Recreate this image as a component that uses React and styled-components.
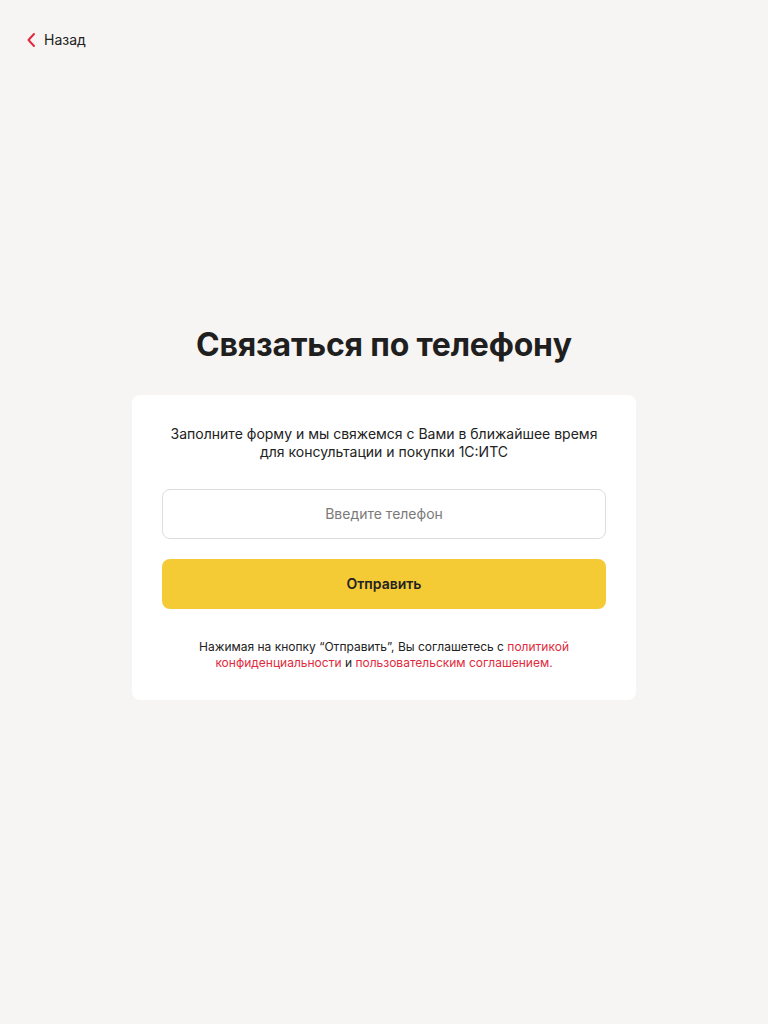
import React, { useState } from 'react';
import styled, { createGlobalStyle } from 'styled-components';

const GlobalStyle = createGlobalStyle`
  * { box-sizing: border-box; }
  body {
    margin: 0;
    background: #f6f5f3;
    font-family: Inter, 'Noto Sans', sans-serif;
    color: #222222;
  }
`;

const Page = styled.div`
  min-height: 100vh;
  display: flex;
  flex-direction: column;
`;

const Header = styled.header`
  height: 80px;
  padding: 30px 26px 0;
`;

const BackLink = styled.a`
  display: inline-flex;
  align-items: center;
  gap: 8px;
  font-size: 14px;
  line-height: 20px;
  color: #222222;
  text-decoration: none;
  cursor: pointer;
`;

const Main = styled.main`
  flex: 1;
  display: flex;
  flex-direction: column;
  align-items: center;
  justify-content: center;
  padding-bottom: 80px;
`;

const Title = styled.h1`
  margin: 0 0 30px;
  font-size: 32px;
  line-height: 40px;
  font-weight: 700;
  letter-spacing: -0.2px;
  color: #1f1f1f;
  text-align: center;
`;

const Card = styled.form`
  width: 504px;
  background: #ffffff;
  border-radius: 8px;
  padding: 30px 30px 29px;
  display: flex;
  flex-direction: column;
  align-items: stretch;
`;

const Lead = styled.p`
  margin: 0 0 28px;
  font-size: 14px;
  line-height: 18px;
  text-align: center;
  color: #222222;
`;

const PhoneInput = styled.input`
  height: 50px;
  border: 1px solid #dcdde0;
  border-radius: 8px;
  font-family: inherit;
  font-size: 14px;
  text-align: center;
  color: #222222;
  outline: none;
  &::placeholder { color: #7a7a7a; }
`;

const SubmitButton = styled.button`
  margin-top: 20px;
  height: 50px;
  border: none;
  border-radius: 8px;
  background: #f4cb35;
  font-family: inherit;
  font-size: 14px;
  font-weight: 600;
  color: #222222;
  cursor: pointer;
`;

const Legal = styled.p`
  margin: 30px 0 0;
  font-size: 12px;
  line-height: 16px;
  text-align: center;
  color: #222222;
`;

const RedLink = styled.a`
  color: #e12a3d;
  text-decoration: none;
`;

function Chevron() {
  return (
    <svg width="10" height="16" viewBox="0 0 10 16" fill="none">
      <path d="M8 2L2.5 8L8 14" stroke="#e12a3d" strokeWidth="2" strokeLinecap="round" strokeLinejoin="round" />
    </svg>
  );
}

function App() {
  const [phone, setPhone] = useState('');

  function handleSubmit(e) {
    e.preventDefault();
  }

  return (
    <Page>
      <GlobalStyle />
      <Header>
        <BackLink>
          <Chevron />
          Назад
        </BackLink>
      </Header>
      <Main>
        <Title>Связаться по телефону</Title>
        <Card onSubmit={handleSubmit}>
          <Lead>
            Заполните форму и мы свяжемся с Вами в ближайшее время
            <br />
            для консультации и покупки 1С:ИТС
          </Lead>
          <PhoneInput
            placeholder="Введите телефон"
            type="tel"
            value={phone}
            onChange={e => setPhone(e.target.value)}
          />
          <SubmitButton type="submit">Отправить</SubmitButton>
          <Legal>
            Нажимая на кнопку “Отправить”, Вы соглашетесь с <RedLink>политикой</RedLink>
            <br />
            <RedLink>конфиденциальности</RedLink> и <RedLink>пользовательским соглашением.</RedLink>
          </Legal>
        </Card>
      </Main>
    </Page>
  );
}

export default App;
